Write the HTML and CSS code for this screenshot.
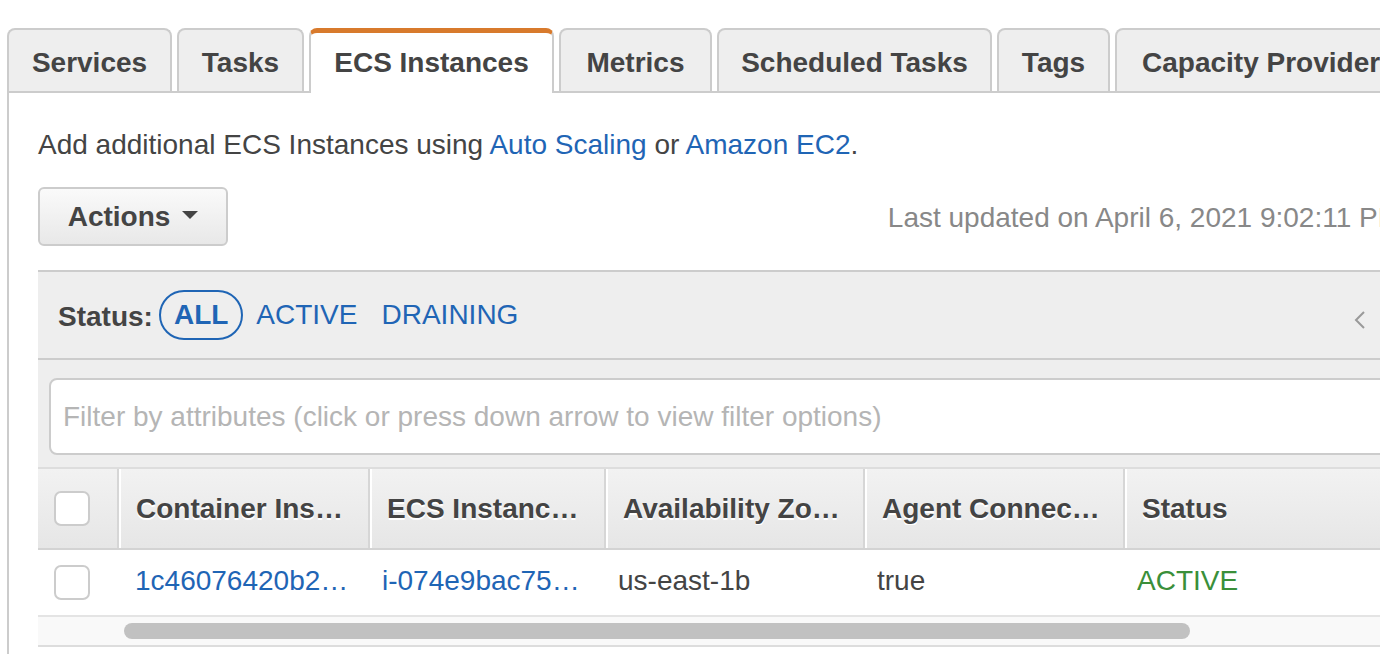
FILE: index.html
```html
<!DOCTYPE html>
<html>
<head>
<meta charset="utf-8">
<link rel="stylesheet" href="styles.css">
</head>
<body>
<div class="page">
  <div class="tabs">
    <div class="tab t-services">Services</div>
    <div class="tab t-tasks">Tasks</div>
    <div class="tab t-instances active">ECS Instances</div>
    <div class="tab t-metrics">Metrics</div>
    <div class="tab t-scheduled">Scheduled Tasks</div>
    <div class="tab t-tags">Tags</div>
    <div class="tab t-capacity">Capacity Providers</div>
  </div>
  <div class="panel">
    <p class="intro">Add additional ECS Instances using <a class="link">Auto Scaling</a> or <a class="link">Amazon EC2</a>.</p>
    <div class="toolbar">
      <button class="btn-actions">Actions <span class="caret"></span></button>
      <div class="updated">Last updated on April 6, 2021 9:02:11 PM</div>
    </div>
    <div class="grid">
      <div class="statusbar">
        <span class="status-label">Status:</span>
        <span class="pill">ALL</span>
        <a class="status-link">ACTIVE</a>
        <a class="status-link">DRAINING</a>
        <span class="pager">
          <svg width="14" height="22" viewBox="0 0 14 22"><path d="M11 3 L3 11 L11 19" fill="none" stroke="#999" stroke-width="2"/></svg>
        </span>
      </div>
      <div class="filterbar">
        <div class="filter-input">Filter by attributes (click or press down arrow to view filter options)</div>
      </div>
      <div class="table">
        <div class="thead">
          <div class="cell chk"><span class="checkbox"></span></div>
          <div class="cell c1"><span class="ell">Container Instance</span></div>
          <div class="cell c2"><span class="ell">ECS Instance ID</span></div>
          <div class="cell c3"><span class="ell">Availability Zone</span></div>
          <div class="cell c4"><span class="ell">Agent Connected</span></div>
          <div class="cell c5"><span class="ell">Status</span></div>
        </div>
        <div class="trow">
          <div class="cell chk"><span class="checkbox"></span></div>
          <div class="cell c1"><a class="ell link">1c46076420b24d0a9e7f</a></div>
          <div class="cell c2"><a class="ell link">i-074e9bac75f1d2a3c</a></div>
          <div class="cell c3"><span class="ell">us-east-1b</span></div>
          <div class="cell c4"><span class="ell">true</span></div>
          <div class="cell c5"><span class="ell active-text">ACTIVE</span></div>
        </div>
        <div class="scrolltrack"><div class="thumb"></div></div>
      </div>
    </div>
  </div>
</div>
</body>
</html>
```

FILE: styles.css
```css
html, body {
  margin: 0;
  padding: 0;
  background: #fff;
  overflow: hidden;
}
body {
  font-family: "Liberation Sans", Arial, Helvetica, sans-serif;
  font-size: 28px;
  color: #444;
  width: 1380px;
  height: 654px;
}
.page {
  padding: 28px 0 0 7px;
  width: 1700px;
}
.tabs {
  display: flex;
  align-items: flex-end;
  gap: 5px;
  position: relative;
  z-index: 2;
}
.tab {
  box-sizing: border-box;
  height: 63px;
  padding: 4px 0 0;
  display: flex;
  align-items: center;
  justify-content: center;
  background: #eee;
  border: 2px solid #ccc;
  border-bottom: 0;
  border-radius: 8px 8px 0 0;
  font-weight: bold;
  color: #444;
  white-space: nowrap;
  overflow: hidden;
}
.t-services { width: 165px; }
.t-tasks { width: 127px; }
.t-instances { width: 245px; }
.t-metrics { width: 153px; }
.t-scheduled { width: 275px; }
.t-tags { width: 113px; }
.t-capacity { width: 300px; justify-content: flex-start; padding-left: 25px; }
.tab.active {
  height: 65px;
  margin-bottom: -2px;
  background: #fff;
  border-top: 5px solid #d87a2c;
  padding-top: 0;
}
.panel {
  border-top: 2px solid #ccc;
  border-left: 2px solid #ccc;
  padding: 32px 0 0 29px;
  height: 600px;
}
.intro {
  margin: 0;
  line-height: 40px;
}
.link {
  color: #1f65b5;
  text-decoration: none;
}
.toolbar {
  margin-top: 22px;
  display: flex;
  align-items: center;
  width: 1363px;
}
.btn-actions {
  box-sizing: border-box;
  width: 190px;
  height: 59px;
  border: 2px solid #ccc;
  border-radius: 6px;
  background: linear-gradient(#fafafa, #e8e8e8);
  font-family: inherit;
  font-size: 28px;
  font-weight: bold;
  color: #444;
  display: flex;
  align-items: center;
  justify-content: center;
  gap: 12px;
  padding: 0;
}
.caret {
  width: 0;
  height: 0;
  border-left: 8px solid transparent;
  border-right: 8px solid transparent;
  border-top: 8px solid #444;
  margin-top: -4px;
}
.updated {
  margin-left: auto;
  color: #888;
  white-space: nowrap;
  padding-top: 3px;
}
.grid {
  margin-top: 24px;
  width: 1560px;
}
.statusbar {
  box-sizing: border-box;
  height: 90px;
  background: #eee;
  border-top: 2px solid #ccc;
  border-bottom: 2px solid #ccc;
  display: flex;
  align-items: center;
  padding: 4px 0 0 20px;
}
.status-label {
  font-weight: bold;
  margin-right: 6px;
}
.pill {
  box-sizing: border-box;
  height: 50px;
  padding: 0 13px;
  border: 2px solid #1f65b5;
  border-radius: 25px;
  color: #1f65b5;
  font-weight: bold;
  display: flex;
  align-items: center;
  margin-top: -4px;
  margin-right: 13px;
}
.status-link {
  color: #1f65b5;
  margin-right: 24px;
  margin-top: -4px;
}
.pager {
  position: absolute;
  left: 1353px;
  top: 306px;
}
.filterbar {
  background: #eee;
  padding: 18px 0 12px 11px;
}
.filter-input {
  box-sizing: border-box;
  height: 77px;
  background: #fff;
  border: 2px solid #ccc;
  border-radius: 8px;
  display: flex;
  align-items: center;
  padding: 0 12px;
  color: #b5b5b5;
  white-space: nowrap;
}
.table {
  border-top: 2px solid #ddd;
}
.thead, .trow {
  display: grid;
  grid-template-columns: 79px 251px 236px 259px 260px 1fr;
}
.thead {
  height: 79px;
  background: linear-gradient(#f2f2f2, #e6e6e6);
  border-bottom: 2px solid #d3d3d3;
}
.thead .cell {
  font-weight: bold;
  text-shadow: 0 2px 0 #fff;
  padding: 0 20px 0 17px;
  border-left: 2px solid #d6d6d6;
  box-shadow: inset 2px 0 0 #fff;
}
.thead .cell.chk {
  border-left: 0;
  box-shadow: none;
}
.cell {
  display: flex;
  align-items: center;
  min-width: 0;
  overflow: hidden;
  box-sizing: border-box;
}
.trow {
  height: 65px;
  background: #fff;
  border-bottom: 2px solid #e4e4e4;
}
.trow .cell {
  padding: 0 18px 3px 14px;
}
.trow .cell.c1 {
  padding-left: 18px;
}
.cell.chk {
  padding: 0 0 0 16px;
}
.trow .cell.chk {
  padding: 0 0 0 16px;
}
.checkbox {
  box-sizing: border-box;
  width: 36px;
  height: 35px;
  background: #fff;
  border: 2px solid #ccc;
  border-radius: 7px;
  flex: none;
}
.ell {
  display: block;
  white-space: nowrap;
  overflow: hidden;
  text-overflow: ellipsis;
  min-width: 0;
}
.active-text {
  color: #3a8f3a;
}
.scrolltrack {
  height: 28px;
  background: #f9f9f9;
  border-bottom: 2px solid #ddd;
  display: flex;
  align-items: center;
  padding-left: 86px;
}
.thumb {
  width: 1066px;
  height: 16px;
  border-radius: 8px;
  background: #c1c1c1;
}
```
